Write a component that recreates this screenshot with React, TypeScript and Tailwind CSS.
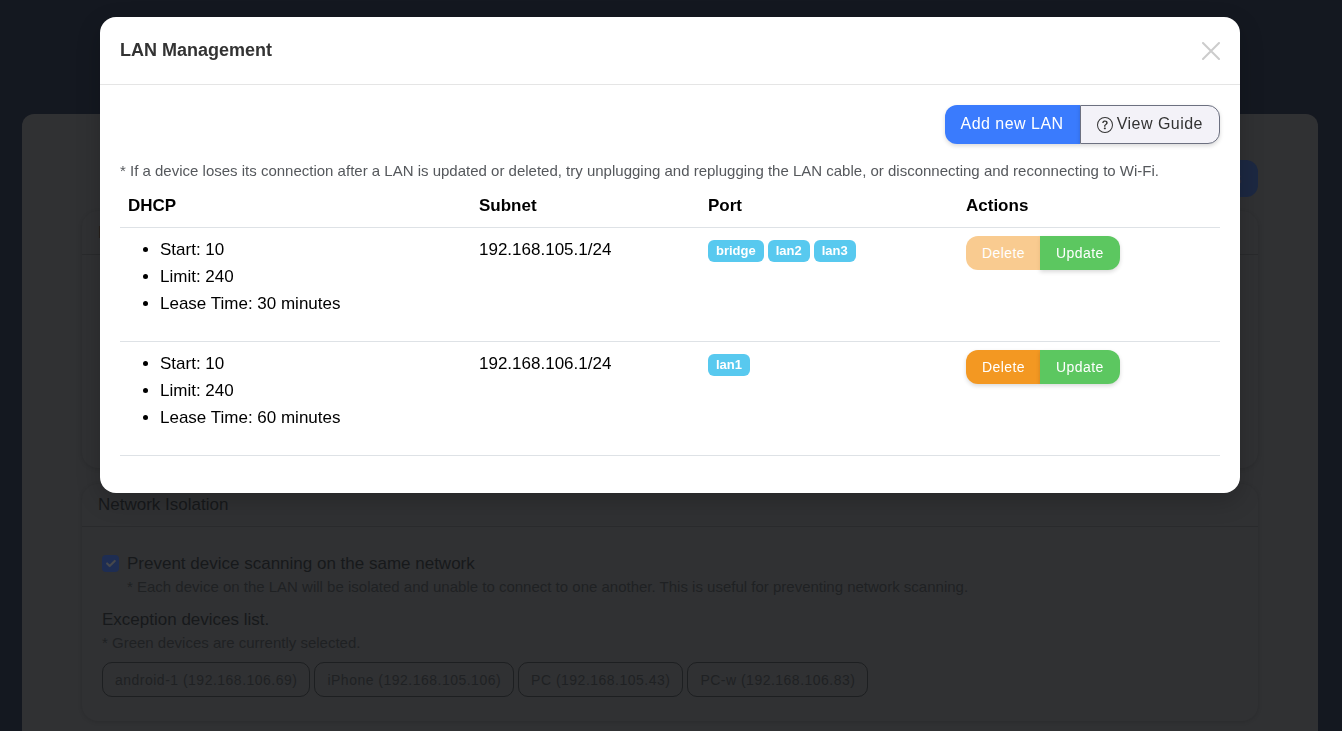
import React from "react";
import { BsQuestionCircle } from "react-icons/bs";

const lans = [
  {
    start: 10,
    limit: 240,
    lease: "30 minutes",
    subnet: "192.168.105.1/24",
    ports: ["bridge", "lan2", "lan3"],
    locked: true,
  },
  {
    start: 10,
    limit: 240,
    lease: "60 minutes",
    subnet: "192.168.106.1/24",
    ports: ["lan1"],
    locked: false,
  },
];

const devices = [
  "android-1 (192.168.106.69)",
  "iPhone (192.168.105.106)",
  "PC (192.168.105.43)",
  "PC-w (192.168.106.83)",
];

const SettingsPage = () => {
  return (
    <div className="flex min-h-screen flex-col overflow-hidden pt-[114px] pr-6 pl-[22px]">
      <main className="flex-1 rounded-t-xl bg-[#303133] px-[60px] pt-[46px] pb-2.5 text-[#17191b]">
        <div className="flex justify-end">
          <button className="h-[37px] rounded-xl bg-[#1c2842] px-4 text-base tracking-[0.03em] text-[#303133]">
            LAN Settings
          </button>
        </div>

        <section className="mt-3.5 h-[257px] rounded-2xl shadow-[0_1px_4px_rgba(0,0,0,0.12)]">
          <h2 className="border-b border-[#292a2c] px-4 py-2">Network</h2>
        </section>

        <section className="mt-4 rounded-2xl shadow-[0_1px_4px_rgba(0,0,0,0.12)]">
          <h2 className="border-b border-[#292a2c] px-4 pt-[7px] pb-2">
            Network Isolation
          </h2>
          <div className="px-5 pt-[23px] pb-6">
            <label className="flex items-center gap-2">
              <span className="relative flex">
                <input
                  type="checkbox"
                  defaultChecked
                  className="size-[17px] appearance-none rounded bg-[#1e2d52]"
                />
                <svg
                  viewBox="0 0 20 20"
                  className="pointer-events-none absolute inset-0 size-[17px]"
                  fill="none"
                  stroke="#46484c"
                  strokeWidth="2.5"
                  strokeLinecap="round"
                  strokeLinejoin="round"
                >
                  <path d="m6 10 3 3 6-6" />
                </svg>
              </span>
              Prevent device scanning on the same network
            </label>
            <p className="pl-[25px] text-[15px] leading-5 text-[#1f2123]">
              * Each device on the LAN will be isolated and unable to connect to
              one another. This is useful for preventing network scanning.
            </p>
            <p className="mt-[9px]">Exception devices list.</p>
            <p className="text-[15px] leading-5 text-[#1f2123]">
              * Green devices are currently selected.
            </p>
            <div className="mt-[9px] flex flex-wrap gap-1">
              {devices.map((device) => (
                <button
                  key={device}
                  className="h-[35px] rounded-[10px] border border-[#1d1f21] px-3 text-sm tracking-[0.035em] text-[#1f2123]"
                >
                  {device}
                </button>
              ))}
            </div>
          </div>
        </section>
      </main>
    </div>
  );
};

const LanTable = () => {
  return (
    <table className="mb-[17px] w-full text-left text-black">
      <thead>
        <tr className="border-b border-[#dee2e6]">
          <th className="w-[351px] p-2">DHCP</th>
          <th className="w-[229px] p-2">Subnet</th>
          <th className="w-[258px] p-2">Port</th>
          <th className="p-2">Actions</th>
        </tr>
      </thead>
      <tbody>
        {lans.map((lan) => (
          <tr key={lan.subnet} className="border-b border-[#dee2e6] align-top">
            <td className="p-2">
              <ul className="mb-4 list-disc pl-8">
                <li>Start: {lan.start}</li>
                <li>Limit: {lan.limit}</li>
                <li>Lease Time: {lan.lease}</li>
              </ul>
            </td>
            <td className="p-2">{lan.subnet}</td>
            <td className="p-2">
              <div className="flex gap-1 pt-1">
                {lan.ports.map((port) => (
                  <span
                    key={port}
                    className="rounded-md bg-[#58c9ef] px-2 text-[13px] leading-[22px] font-bold text-white"
                  >
                    {port}
                  </span>
                ))}
              </div>
            </td>
            <td className="p-2">
              <div className="flex text-sm tracking-[0.03em] text-white">
                <button
                  disabled={lan.locked}
                  className="h-[34px] rounded-l-xl bg-[#f39822] pr-[15px] pl-4 shadow-[0_2px_4px_rgba(0,0,0,0.15)] disabled:opacity-50 disabled:shadow-none"
                >
                  Delete
                </button>
                <button className="h-[34px] rounded-r-xl bg-[#5cc760] px-4 shadow-[0_2px_4px_rgba(0,0,0,0.15)]">
                  Update
                </button>
              </div>
            </td>
          </tr>
        ))}
      </tbody>
    </table>
  );
};

const LanModal = () => {
  return (
    <div className="fixed inset-0 overflow-y-auto py-[17px] pr-[18px] pl-4">
      <div
        role="dialog"
        aria-labelledby="lan-title"
        className="mx-auto max-w-[1140px] rounded-2xl bg-white shadow-[0_8px_24px_rgba(0,0,0,0.2)]"
      >
        <div className="flex items-center justify-between border-b border-[#e5e5e5] p-5">
          <h1
            id="lan-title"
            className="text-lg leading-[27px] font-bold text-[#333]"
          >
            LAN Management
          </h1>
          <button aria-label="Close" className="text-[#ccc]">
            <svg
              viewBox="0 0 18 18"
              className="size-[18px]"
              fill="none"
              stroke="currentColor"
              strokeWidth="2"
              strokeLinecap="round"
            >
              <path d="M1 1l16 16M17 1L1 17" />
            </svg>
          </button>
        </div>
        <div className="p-5">
          <div className="flex justify-end text-base tracking-[0.03em]">
            <button className="h-[39px] rounded-l-xl bg-[#3a7bfd] px-4 pb-0.5 text-white shadow-[0_2px_4px_rgba(0,0,0,0.15)]">
              Add new LAN
            </button>
            <button className="flex h-[39px] items-center gap-1 rounded-r-xl border border-[#6c7080] bg-[#f3f2f8] px-4 pb-0.5 text-[#333] shadow-[0_2px_4px_rgba(0,0,0,0.15)]">
              <BsQuestionCircle className="mt-0.5 size-4" />
              View Guide
            </button>
          </div>
          <p className="mt-[17px] mb-[3px] text-[15px] leading-5 text-[#55585c]">
            * If a device loses its connection after a LAN is updated or
            deleted, try unplugging and replugging the LAN cable, or
            disconnecting and reconnecting to Wi-Fi.
          </p>
          <LanTable />
        </div>
      </div>
    </div>
  );
};

const App = () => {
  return (
    <div className="bg-[#141820] font-['Liberation_Sans',Arial,sans-serif] text-[17px] leading-[27px]">
      <SettingsPage />
      <LanModal />
    </div>
  );
};

export default App;
